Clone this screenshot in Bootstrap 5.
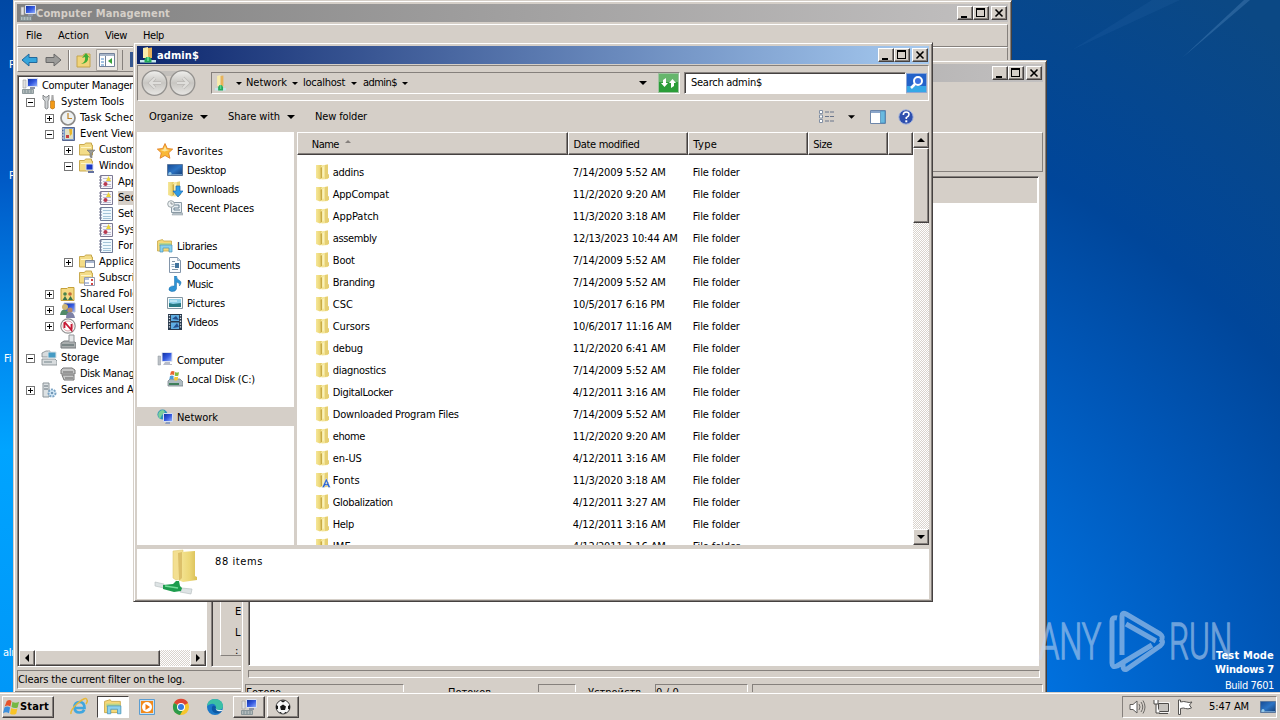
<!DOCTYPE html>
<html lang="en">
<head>
  <meta charset="UTF-8" />
  <meta name="viewport" content="width=device-width, initial-scale=1.0"/>
  <title>admin$</title>
  <link rel="stylesheet" href="https://cdn.jsdelivr.net/npm/bootstrap@5.3.0/dist/css/bootstrap.min.css" />
  <style>
    :root { --face: #d5cfc8; --shade: #85807c; --dark: #454140; }
    body {
      width: 1280px; height: 720px; overflow: hidden; position: relative; color: #000;
      font: 11px/14px "DejaVu Sans Condensed", "DejaVu Sans", sans-serif; letter-spacing: -.25px;
      background: radial-gradient(ellipse 950px 800px at 560px 800px, #0090ff 0, #0076e6 48%, #0057b8 76%, #00469a 93%, #0b4884 122%);
    }
    svg { display: block; flex: none; overflow: visible; }
    .ic { width: 16px; height: 16px; }
    .txt { white-space: nowrap; }
    .bar .txt, .side .txt, .files .txt, .head .txt, .build .txt { position: relative; top: 1px; }
    .face { background: var(--face); }
    .strip { left: 0; top: 0; width: 14px; height: 692px; background: linear-gradient(#0048a4, #0058c4 25%, #0086ee 48%, #00a4ff 65%, #0097f8); }
    .strip span { position: absolute; color: #fff; }
    .beam { left: 1012px; top: 0; }
    .win { position: absolute; background: var(--face); border: 1px solid; border-color: var(--face) #454140 #454140 var(--face); box-shadow: inset 1px 1px #fff, inset -1px -1px #85807c; padding: 3px; }
    .win-mmc { left: 13px; top: 0; width: 999px; height: 693px; }
    .win-events { left: 241px; top: 60px; width: 806px; height: 660px; }
    .win-files { left: 133px; top: 42px; width: 800px; height: 560px; }
    .bar { height: 18px; font-weight: bold; padding: 0 1px 0 3px; }
    .bar-off { background: linear-gradient(90deg, #808080, #c2c0c0); color: #d5cfc8; }
    .bar-on { background: linear-gradient(90deg, #0c266d, #a6caf0); color: #fff; }
    .cap { width: 16px; height: 14px; background: var(--face); border: 1px solid; border-color: #fff #454140 #454140 #fff; box-shadow: inset -1px -1px #85807c; }
    .raised { background: var(--face); border: 1px solid; border-color: #fff #454140 #454140 #fff; box-shadow: inset -1px -1px #85807c; }
    .sunk { border: 1px solid; border-color: #85807c #fff #fff #85807c; }
    .well { background: #fff; border: 1px solid; border-color: #85807c #fff #fff #85807c; box-shadow: inset 1px 1px #454140; }
    .well.face { background: var(--face); }
    .etch { border: 1px solid; border-color: #fff #85807c #85807c #fff; }
    .hatch { background: repeating-conic-gradient(#fff 0 25%, #d9d3cc 0 50%) 0 0 / 2px 2px; }
    .menu { height: 23px; padding-left: 8px; margin-top: 2px; }
    .tools { height: 25px; padding-left: 3px; }
    .tree { width: 190px; height: 592px; padding: 2px 0 0 1px; }
    .tree-line { height: 16px; }
    .tree-body { height: 572px; overflow: hidden; }
    .twig { width: 9px; height: 9px; border: 1px solid #777; background: #fff; flex: none; }
    .sel { background: var(--face); }
    .side { width: 157px; background: #fff; padding-top: 9px; }
    .side-line { height: 19px; }
    .head { height: 23px; }
    .head > div { border: 1px solid; border-color: #fff #454140 #454140 #fff; box-shadow: inset -1px -1px #85807c; padding: 0 0 0 4px; }
    .files { background: #fff; height: 390px; overflow: hidden; padding-top: 6px; }
    .file-line { height: 22px; padding-left: 18px; }
    .c-name { width: 272px; } .c-date { width: 120px; } .c-type { width: 120px; } .c-size { width: 80px; } .c-rest { width: 25px; }
    .task { left: 0; top: 692px; width: 1280px; height: 28px; background: var(--face); border-top: 1px solid var(--face); box-shadow: inset 0 1px #fff; padding: 3px 2px 2px; }
    .task-btn { width: 32px; height: 22px; }
    .pressed { background: #fff; border: 1px solid; border-color: #454140 #fff #fff #454140; }
    .brand { left: 1036px; top: 606px; }
    .build { right: 6px; top: 648px; color: #fff; line-height: 14px; }
  </style>
</head>
<body>
  <svg width="0" height="0" class="position-absolute">
    <defs>
      <linearGradient id="gFold" x2="1"><stop offset="0" stop-color="#f6e79a"/><stop offset=".6" stop-color="#ecd777"/><stop offset="1" stop-color="#d9bf55"/></linearGradient>
      <linearGradient id="gScr" x2="1" y2="1"><stop offset="0" stop-color="#0d2e9c"/><stop offset=".5" stop-color="#3358df"/><stop offset="1" stop-color="#9ab6ff"/></linearGradient>
      <linearGradient id="gSky" x2="1" y2="1"><stop offset="0" stop-color="#174b94"/><stop offset=".5" stop-color="#2c74c4"/><stop offset="1" stop-color="#123970"/></linearGradient>
      <linearGradient id="gBall" y2="1" x2="0"><stop offset="0" stop-color="#efefed"/><stop offset=".5" stop-color="#c8c6c2"/><stop offset="1" stop-color="#e8e7e4"/></linearGradient>
      <symbol id="min" viewBox="0 0 14 12"><path d="M3 9h6v2H3z"/></symbol>
      <symbol id="max" viewBox="0 0 14 12"><path d="M2 1h9v9H2zM3 3v6h7V3z" fill-rule="evenodd"/></symbol>
      <symbol id="close" viewBox="0 0 14 12"><path d="M3.500 2.500l7 7M10.500 2.500l-7 7" stroke="#000" stroke-width="1.600"/></symbol>
      <symbol id="down" viewBox="0 0 8 4"><path d="M0 0h8L4 4z"/></symbol>
      <symbol id="folder" viewBox="0 0 16 16"><path d="M1 1h6v13l-2 1.500-4-1.500z" fill="url(#gFold)"/><path d="M6 1.500l7-1V15l-6 .5-2-1z" fill="#f3e496"/><path d="M10 1l3-.5V10l1 .5V14l-4 1z" fill="#e6cf72"/><path d="M7 3v10.500L5.500 15V4z" fill="#c9ab45"/><path d="M7.500 3L9 2.500v10L7.500 13z" fill="#f9f1bd"/></symbol>
      <symbol id="fontfolder" viewBox="0 0 16 16"><use href="#folder"/><path d="M7 15.500L11.300 6l4.200 9.500h-2.200l-.7-2H10l-.7 2zM10.600 12h1.500l-.8-2.300z" fill="#245fd0" stroke="#fff" stroke-width=".4"/></symbol>
      <symbol id="netfolder" viewBox="0 0 16 16"><path d="M3 1l5-1v11H3z" fill="#f9ecab"/><path d="M8 1l4-.5V11H8z" fill="#e8b35a"/><path d="M0 13h16v2.500H0z" fill="#c4e6ec"/><path d="M4.500 12l2-2h3l2 2v3.500h-7z" fill="#25a95a"/><path d="M7 10h2v4H7z" fill="#57d88b"/></symbol>
      <symbol id="pc" viewBox="0 0 16 16"><path d="M5 .5h10v9H5z" fill="url(#gScr)" stroke="#dde2ee"/><path d="M8 10h5v2h2v1H6z" fill="#b7bcc9"/><path d="M1 4h2.500v9H1z" fill="#bcc1c6" stroke="#8d949c" stroke-width=".5"/></symbol>
      <symbol id="mmc" viewBox="0 0 16 16"><path d="M5.500.5h10v8h-10z" fill="url(#gScr)" stroke="#dde2ee"/><path d="M8 9h5v2H8z" fill="#8c93a5"/><path d="M1 2h3v8H1z" fill="#e1e1e1" stroke="#9a9a9a" stroke-width=".6"/><path d="M.5 11.500h11v4H.5z" fill="#b4bcbc" stroke="#7b8a8e" stroke-width=".8"/><path d="M3 12v3M6 12v3M9 12v3" stroke="#6d8288" stroke-width=".8"/></symbol>
      <symbol id="tools" viewBox="0 0 16 16"><path d="M2 1v4l2 2v7q1.500 2 3 0V7l1-2V1L6 3H4z" fill="#cfd2d4" stroke="#73777a" stroke-width=".8"/><path d="M10.500 1h2l.5 6h-3z" fill="#aaa"/><path d="M9.500 7h4v7q-2 2-4 0z" fill="#f29a16" stroke="#b96d08" stroke-width=".6"/></symbol>
      <symbol id="clock" viewBox="0 0 16 16"><circle cx="8" cy="8" r="7" fill="#edf1f2" stroke="#8d8b88" stroke-width="1.700"/><path d="M8 3v5.500h4" stroke="#c1852a" stroke-width="1.200" fill="none"/></symbol>
      <symbol id="book" viewBox="0 0 16 16"><path d="M2.500 1.500h12v13h-12z" fill="#7d9ccb" stroke="#56668f"/><path d="M5 3h8v10H5z" fill="#dfe0c4"/><path d="M9 3h3v5l-2 2z" fill="#e8b62a"/><path d="M6 9h3v3H6z" fill="#c54040"/><path d="M1 3h3M1 6h3M1 9h3M1 12h3" stroke="#ddd"/></symbol>
      <symbol id="log" viewBox="0 0 16 16"><path d="M2.500 1.500h12v13h-12z" fill="#f8f6fa" stroke="#7c7a94"/><path d="M5 4.500h8M5 7.500h8M5 10.500h8M5 12.500h8" stroke="#bcbcd0"/><path d="M10.500 2l2.500 5H8z" fill="#ecd53c"/><circle cx="7.500" cy="10" r="2" fill="#b8384e"/><path d="M1 3h3M1 6h3M1 9h3M1 12h3" stroke="#7a7a94"/></symbol>
      <symbol id="loglines" viewBox="0 0 16 16"><path d="M2.500 1.500h12v13h-12z" fill="#eff8fd" stroke="#6f7a96"/><path d="M5 4.500h8M5 7.500h8M5 10.500h8M5 12.500h8" stroke="#a4c4d8"/><path d="M1 3h3M1 6h3M1 9h3M1 12h3" stroke="#707692"/></symbol>
      <symbol id="flat" viewBox="0 0 16 16"><path d="M.5 2.500h5l1-1.500h6v2h1v10H.5z" fill="#f3dc88" stroke="#c9aa50"/><path d="M2 5.500h10" stroke="#fff6c8"/></symbol>
      <symbol id="filter" viewBox="0 0 16 16"><use href="#flat"/><path d="M8 8h8l-3 3v5l-2-1v-4z" fill="#9b9b95" stroke="#666" stroke-width=".5"/></symbol>
      <symbol id="winlog" viewBox="0 0 16 16"><use href="#flat"/><path d="M7 6h7v6H7z" fill="#1c38c6" stroke="#d4def4"/><path d="M9 13h6v2H9z" fill="#6472a0"/></symbol>
      <symbol id="applog" viewBox="0 0 16 16"><use href="#flat"/><path d="M6.500 6.500h9v7h-9z" fill="#fff" stroke="#798395"/><path d="M7 7h8v2H7z" fill="#a9b7d0"/></symbol>
      <symbol id="subs" viewBox="0 0 16 16"><use href="#flat"/><path d="M5.500 7.500h10v8h-10z" fill="#fff" stroke="#949cb2"/><path d="M6 9h4M6 13h4" stroke="#6884bd"/><path d="M12 9h2v2h-2zM12 13h2v2h-2z" fill="#cf4545"/></symbol>
      <symbol id="shared" viewBox="0 0 16 16"><path d="M1 2.500h6l1-1h6v13H1z" fill="#f4d982" stroke="#c5a13b"/><circle cx="5" cy="8" r="1.800" fill="#49834d"/><circle cx="10" cy="8" r="1.800" fill="#c46a3a"/><path d="M2.500 14l2.500-4 2.500 4M8 14l2.500-4 2.500 4" fill="#38734b"/></symbol>
      <symbol id="users" viewBox="0 0 16 16"><path d="M4 1h11v9H4z" fill="url(#gScr)" stroke="#b8bccc"/><circle cx="5" cy="5" r="3" fill="#d1b774"/><path d="M0 13q1-6 5-5t5 5z" fill="#528a67"/><circle cx="10" cy="8" r="2.600" fill="#b68765"/><path d="M6 16q0-6 4-6t5 6z" fill="#7d81a6"/></symbol>
      <symbol id="perf" viewBox="0 0 16 16"><circle cx="8" cy="8" r="7.200" fill="#fff" stroke="#919191" stroke-width="1.200"/><circle cx="8" cy="8" r="5" fill="none" stroke="#d9a0a5" stroke-width="1"/><path d="M4.500 4v6M4.500 4l7 8V6" fill="none" stroke="#c61a36" stroke-width="1.800"/></symbol>
      <symbol id="device" viewBox="0 0 16 16"><path d="M1 9l3-2h9l3 2v5H1z" fill="#a9adae" stroke="#75797c"/><path d="M9 1h5v7H9z" fill="#e5e7e8" stroke="#919598"/><path d="M2 11h12" stroke="#6c7a7a" stroke-width="1.500"/></symbol>
      <symbol id="storage" viewBox="0 0 16 16"><path d="M1 3l4-2h4v6H1zM1 9h13l2 2v4H1z" fill="#d8dcde" stroke="#7d878b" stroke-width=".8"/><path d="M7 2h8v6H7z" fill="#459bc4" stroke="#d9e1e4"/><path d="M3 12h8" stroke="#75858b"/></symbol>
      <symbol id="disk" viewBox="0 0 16 16"><path d="M3 2h9l3 2v4H1V4zM2 9h12v5H4z" fill="#c6c7c7" stroke="#777"/><path d="M3 6h10M5 12h8" stroke="#666" stroke-width="1.200"/></symbol>
      <symbol id="services" viewBox="0 0 16 16"><path d="M2 1h6v14H2z" fill="#dce1e3" stroke="#8b9499"/><path d="M3 4h4M3 7h4" stroke="#64717b"/><circle cx="11" cy="11" r="3.500" fill="#d9ecf9" stroke="#7aa3c4" stroke-width="2" stroke-dasharray="2 1"/><circle cx="11" cy="11" r="1.300" fill="#7398b7"/></symbol>
      <symbol id="star" viewBox="0 0 16 16"><path d="M8 .5l2.300 5 5.400.6-4 3.700 1.200 5.500L8 12.500l-4.900 2.800 1.200-5.500-4-3.700 5.400-.6z" fill="#f9b836" stroke="#e0791c" stroke-width=".8"/><path d="M8 3l1.500 3.500 3 .4-5 1.600-4-1.500 3-.5z" fill="#fee59a"/></symbol>
      <symbol id="desktop" viewBox="0 0 16 16"><path d="M.5 2.500h15v11H.5z" fill="url(#gSky)" stroke="#5c789d"/><path d="M1 12.500h14" stroke="#6e9cc9"/><circle cx="3" cy="11.500" r="1.500" fill="#99cbe8"/></symbol>
      <symbol id="downloads" viewBox="0 0 16 16"><use href="#folder" x="0"/><path d="M9 5h4v5h3l-5 6-5-6h3z" fill="#2f9be6" stroke="#1869b4" stroke-width=".7"/></symbol>
      <symbol id="recent" viewBox="0 0 16 16"><path d="M4.500 2.500h10v10h-10z" fill="#e8eef2" stroke="#8a9aa5"/><path d="M6 13h10v2H5z" fill="#bfc9cf" stroke="#8a969d" stroke-width=".5"/><path d="M7 5h5v3H7v2h6" stroke="#6f8594" fill="none"/><circle cx="4" cy="4" r="3.300" fill="#edf1f2" stroke="#9ca6aa"/><path d="M4 2v2h2" stroke="#7a8488" fill="none" stroke-width=".8"/></symbol>
      <symbol id="libs" viewBox="0 0 16 16"><path d="M.5 3l5-1.500 1 1.500h8v10H.5z" fill="#f5d878" stroke="#c8a849" stroke-width=".8"/><path d="M2 5h12v3H2z" fill="#b9d68a"/><path d="M3 7h12v7h-3v-4H6v4H3z" fill="#8bd0ed" stroke="#4897bd" stroke-width=".7"/></symbol>
      <symbol id="docs" viewBox="0 0 16 16"><path d="M2.500.5h8l3 3v12h-11z" fill="#fcfdff" stroke="#8295aa"/><path d="M10.500.5v3h3" fill="#cad6e2" stroke="#8295aa" stroke-width=".6"/><path d="M5 4.500h3M5 12.500h6" stroke="#8296a8"/><path d="M8 6h4v5H8z" fill="#41739d"/><path d="M4.500 7.500h3M4.500 9.500h3" stroke="#8fa9bf"/></symbol>
      <symbol id="music" viewBox="0 0 16 16"><path d="M7.500 0h2q0 3 3 4.500t0 5.500q1-3-3-4v7q-1 3-5 2.500-4-1-2-4 2-2 5-1.500z" fill="#2d93d5" stroke="#176dab" stroke-width=".5"/></symbol>
      <symbol id="pics" viewBox="0 0 16 16"><path d="M.5 2.500h15v11H.5z" fill="#f7fafb" stroke="#8496a2"/><path d="M2 4h12v8H2z" fill="#8fd0e8"/><path d="M2 8l4 1 8-1v4H2z" fill="#297b85"/><path d="M3 6h7" stroke="#eafaff"/></symbol>
      <symbol id="video" viewBox="0 0 16 16"><path d="M1 0h14v16H1z" fill="#28394c"/><path d="M4 1h8v6H4zM4 8.500h8V15H4z" fill="#5faee2"/><path d="M5 5l4-3 3 4zM6 14l4-5 2 4z" fill="#244f8b"/><path d="M2.500 1v14M13.500 1v14" stroke="#dbe2e8" stroke-width="1.300" stroke-dasharray="1.300 1.500"/></symbol>
      <symbol id="cdrive" viewBox="0 0 16 16"><path d="M1 10l2-2h10l3 3v4H1z" fill="#aebbc1" stroke="#78868c" stroke-width=".8"/><path d="M2 12h10v2H2z" fill="#3f7f5a"/><path d="M4 .5q2-1 3.500 0L7 4q-2-1-4 0z" fill="#e8642f"/><path d="M8 1q2 1 4 0l-.6 3.500q-2 1-3.700 0z" fill="#84bb3e"/><path d="M3 5q2-1 3.700 0L6.300 8.500q-2-1-4 0z" fill="#4a9cdb"/><path d="M7.500 5.500q2 1 3.700 0l-.6 3.500q-2 1-3.500 0z" fill="#f6c934"/></symbol>
      <symbol id="network" viewBox="0 0 16 16"><circle cx="5.500" cy="5.500" r="5" fill="#2b94b8"/><path d="M2 3q4-4 6 0L5 6 3 10Q0 7 2 3z" fill="#7cd09a"/><path d="M6.500 4.500h9v8h-9z" fill="url(#gScr)" stroke="#d5e0f3"/><path d="M9 13h4v2H8z" fill="#8d9ec1"/></symbol>
      <symbol id="flagwin" viewBox="0 0 18 18"><path d="M4 2q3-2 5 0L7.800 8q-3-2-6 0z" fill="#e6532a"/><path d="M10 3q3 2 7 0l-1.500 6q-3 1.500-6.500-.5z" fill="#75b843"/><path d="M1.500 9q3-2 6 0l-1.200 6q-3-2-6.300 0z" fill="#3c8fdc"/><path d="M8.700 9.500q3 2 6.500.5L14 15.500q-3 2-6.500 0z" fill="#f8c425"/></symbol>
    </defs>
  </svg>

  <div class="strip position-absolute">
    <span style="left:9px;top:58px">P</span><span style="left:9px;top:169px">P</span><span style="left:4px;top:352px">Fi</span><span style="left:3px;top:646px">alı</span>
  </div>
  <svg class="beam position-absolute" width="268" height="690">
    <path d="M170 58L232 0h6z" fill="#5a8ec4" opacity=".35"/><path d="M60 50L140 0h28z" fill="#3f7cbb" opacity=".12"/>
  </svg>

  <!-- Computer Management -->
  <div class="win win-mmc">
    <div class="bar bar-off d-flex align-items-center" data-caps>
      <svg class="ic"><use href="#mmc"/></svg><span class="txt" data-w="134">Computer Management</span>
    </div>
    <div class="menu etch d-flex align-items-center">
      <span class="txt" data-w="16">File</span><span class="txt ms-3" data-w="31">Action</span><span class="txt ms-3" data-w="22">View</span><span class="txt ms-3" data-w="21">Help</span>
    </div>
    <div class="tools etch d-flex align-items-center">
      <svg width="100" height="24" viewBox="0 0 100 24">
        <path d="M1 12l7-6v3.500h8v5H8V18z" fill="#35a5dc" stroke="#23689b"/><path d="M40 12l-7-6v3.500h-8v5h8V18z" fill="#9b9b99" stroke="#686868"/>
        <path d="M47.500 2v20" stroke="#85807c"/><path d="M48.500 2v20" stroke="#fff"/>
        <path d="M56 8h6l1-2h6v13H56z" fill="#f1d479" stroke="#c4a34d"/><path d="M60 16q5-2 4-7l-3 1 4-5 4 5-2-1q1 6-7 7z" fill="#3ead35"/>
        <path d="M75.500 1.500h21v21h-21z" fill="#ece8e3" stroke="#a5a09b"/><path d="M78.500 5.500h15v13h-15z" fill="#fff" stroke="#738199"/><path d="M79 6h14v2H79z" fill="#a8b6c9"/><path d="M80 11h3M80 14h3M80 17h3" stroke="#4a89c7"/><path d="M84.500 8v10" stroke="#738199"/><path d="M91 10v6l-4-3z" fill="#38a03b"/>
      </svg>
      <svg class="ms-1" width="16" height="24"><path d="M-2.500 2v20" stroke="#85807c"/><path d="M5 4h9v15H5z" fill="#35568f"/></svg>
    </div>
    <div class="d-flex" style="margin-top:3px">
      <div class="tree well">
        <div class="tree-body" id="tree"></div>
        <div class="d-flex hatch">
          <div class="raised" style="width:16px;height:16px"><svg width="14" height="14"><path d="M9 3v8L5 7z"/></svg></div>
          <div class="raised" style="width:125px"></div>
          <div class="raised ms-auto me-0" style="width:16px;height:16px"><svg width="14" height="14"><path d="M5 3v8l4-4z"/></svg></div>
        </div>
      </div>
      <div class="well face flex-fill ms-1 d-flex" style="height:592px">
        <div class="etch ms-2 d-flex flex-column justify-content-end" style="width:500px;height:580px;padding:0 0 0 14px">
          <span style="margin-bottom:7px">E</span><span class="mb-1">L</span><span style="height:11px">:</span>
        </div>
      </div>
    </div>
    <div class="sunk d-flex align-items-center" style="height:19px;margin-top:3px"><span class="txt" data-w="167">Clears the current filter on the log.</span></div>
  </div>

  <!-- window behind the folder view -->
  <div class="win win-events">
    <div class="bar bar-off d-flex align-items-center" data-caps></div>
    <div class="etch" style="height:40px;margin-top:50px"></div>
    <div class="well" style="height:490px;margin:4px 4px 0 3px"><div class="face" style="height:25px;margin:1px"></div></div>
    <div class="sunk" style="height:8px;margin:4px 3px 0"></div>
    <div class="d-flex" style="margin-top:6px;height:20px">
      <div class="sunk" style="width:159px;padding-top:1px"><span class="txt" data-w="35">Готово</span></div>
      <div style="width:134px;padding:2px 0 0 44px"><span class="txt" data-w="43">Потоков</span></div>
      <div class="sunk" style="width:38px"></div>
      <div style="width:79px;padding:2px 0 0 12px"><span class="txt" data-w="53">Устройств</span></div>
      <div class="sunk" style="width:93px;padding-top:1px"><span class="txt" data-w="23">0 / 0</span></div>
      <div class="sunk flex-fill ms-1"></div>
    </div>
  </div>

  <!-- admin$ folder view -->
  <div class="win win-files">
    <div class="bar bar-on d-flex align-items-center" data-caps>
      <svg class="ic" style="margin-right:1px"><use href="#netfolder"/></svg><span class="txt" data-w="42">admin$</span>
    </div>
    <div class="sunk d-flex align-items-center" style="height:36px;margin-top:1px">
      <svg width="62" height="28" viewBox="0 0 62 28" style="margin-left:3px">
        <path d="M10 2h38v5H10z" fill="#c2bfbb"/>
        <g fill="url(#gBall)" stroke="#93918e" stroke-width="1.300"><circle cx="13.500" cy="14" r="12.300"/><circle cx="41.500" cy="14" r="12.300"/></g>
        <path d="M20 14H9M14 9l-5 5 5 5M36 14h11M42 9l5 5-5 5" fill="none" stroke="#bab8b5" stroke-width="3.500"/>
        <path d="M20 14H9M14 9l-5 5 5 5M36 14h11M42 9l5 5-5 5" fill="none" stroke="#dfdedb" stroke-width="2.200"/>
      </svg>
      <div class="sunk d-flex align-items-center" style="width:469px;height:22px;margin-left:8px">
        <svg class="ic"><use href="#netfolder" transform="translate(3 0) scale(.7 1)"/></svg>
        <svg width="6" height="3" style="margin:0 4px 0 8px"><use href="#down"/></svg><span class="txt" data-w="41">Network</span>
        <svg width="6" height="3" style="margin:0 5px"><use href="#down"/></svg><span class="txt" data-w="42">localhost</span>
        <svg width="6" height="3" style="margin:0 6px"><use href="#down"/></svg><span class="txt" data-w="34">admin$</span>
        <svg width="6" height="3" style="margin-left:5px"><use href="#down"/></svg>
        <svg width="8" height="4" style="margin-left:auto;margin-right:11px"><use href="#down"/></svg>
        <svg width="21" height="20" viewBox="0 0 21 20"><path d="M.5.500h20v19H.5z" fill="#2b9d38" stroke="#9fc4a1"/><path d="M1 1h19v8H1z" fill="#66b66c"/><path d="M8 5v5h2l-3.500 4L3 10h2V7zM13 15v-5h-2l3.500-4L18 10h-2v3z" fill="#fff"/></svg>
      </div>
      <div class="well d-flex align-items-center" style="width:222px;height:22px;margin-left:4px;padding-left:6px"><span class="txt" data-w="71">Search admin$</span></div>
      <svg width="21" height="20" viewBox="0 0 21 20"><path d="M.5.500h20v19H.5z" fill="#2362c9" stroke="#8ca6d4"/><path d="M1 13h19v6H1z" fill="#35a7e6"/><circle cx="12" cy="8" r="4" fill="#3d72df" stroke="#fff" stroke-width="2"/><path d="M9 11l-4 4" stroke="#fff" stroke-width="2.500"/></svg>
    </div>
    <div class="d-flex align-items-center" style="height:31px;padding-left:12px">
      <span class="txt" data-w="44">Organize</span><svg width="8" height="4" style="margin:0 19px 0 7px"><use href="#down"/></svg>
      <span class="txt ms-0" style="padding-left:1px" data-w="53">Share with</span><svg width="8" height="4" style="margin:0 20px 0 7px"><use href="#down"/></svg>
      <span class="txt" data-w="52">New folder</span>
      <div class="d-flex align-items-center ms-auto" style="margin-right:15px">
        <svg width="16" height="14"><path d="M.5.500h3v3h-3zM.5 5h3v3h-3zM.5 9.500h3v3h-3z" fill="#fff" stroke="#8290a4"/><path d="M6 2h9M6 6.500h9M6 11h9" stroke="#68748b" stroke-dasharray="4 1"/></svg>
        <svg width="7" height="4" style="margin:0 15px 0 13px"><use href="#down"/></svg>
        <svg width="16" height="14"><path d="M.5.500h15v13H.5z" fill="#fff" stroke="#6d86aa"/><path d="M1 1h9v2H1z" fill="#8ba6ca"/><path d="M10.500 1h4.500v12h-4.500z" fill="#69b9df" stroke="#4586b5" stroke-width=".7"/></svg>
        <svg class="ic" viewBox="0 0 16 16" style="margin-left:12px"><circle cx="8" cy="8" r="7.200" fill="#2e4fae" stroke="#a4b4dc"/><path d="M5.300 6q0-3 2.900-3t2.800 2.600q0 1.600-2.700 3V10" fill="none" stroke="#fff" stroke-width="1.600"/><path d="M7.300 11.300h2v2h-2z" fill="#fff"/></svg>
      </div>
    </div>
    <div class="d-flex" style="height:413px">
      <div class="side" id="places"></div>
      <div style="width:3px"></div>
      <div class="flex-fill" style="min-width:0">
        <div class="head face d-flex">
          <div class="c-name d-flex align-items-center" style="padding-left:14px"><span class="txt" data-w="27">Name</span><svg width="6" height="3" class="mb-1" style="margin-left:6px"><path d="M0 3h6L3 0z" fill="#85807c"/></svg></div>
          <div class="c-date d-flex align-items-center"><span class="txt" data-w="66">Date modified</span></div>
          <div class="c-type d-flex align-items-center"><span class="txt" data-w="24">Type</span></div>
          <div class="c-size d-flex align-items-center"><span class="txt" data-w="19">Size</span></div>
          <div class="c-rest"></div>
        </div>
        <div class="files" id="files"></div>
      </div>
      <div class="hatch d-flex flex-column" style="width:16px">
        <div class="raised" style="height:16px"><svg width="14" height="14"><path d="M3 9h8L7 5z"/></svg></div>
        <div class="raised" style="height:75px"></div>
        <div class="raised mt-auto" style="height:16px"><svg width="14" height="14"><path d="M3 5h8L7 9z"/></svg></div>
      </div>
    </div>
    <div class="bg-white d-flex" style="height:50px;margin-top:4px">
      <svg width="42" height="46" viewBox="0 0 42 46" style="margin-left:18px">
        <path d="M18 2l10-1v28l-7 2-3-2z" fill="#f3df91" stroke="#dfc974" stroke-width=".6"/><path d="M26 3l14-1v25l2 1v3l-14 2-5-2z" fill="url(#gFold)"/><path d="M27 3v26l-3 3-1-28z" fill="#dcc06a"/>
        <path d="M0 33l9 2v4l-9-2zM26 39l11 1-1 5-11-2z" fill="#dde3e4" stroke="#b1babc" stroke-width=".6"/><path d="M8 36l10-1 3-3h3l1 5 2 2-1 3-7 1-11-3z" fill="#1d9c4d"/><path d="M10 37l13 2" stroke="#74dc99" stroke-width="1.500"/>
      </svg>
      <span class="txt" style="margin:6px 0 0 18px" data-w="48">88 items</span>
    </div>
  </div>

  <!-- watermark and build label -->
  <svg class="brand position-absolute" width="200" height="70" fill="#c6d9f0" opacity=".55">
    <g font-family="Roboto, sans-serif" font-weight="300" font-size="50" stroke="#c6d9f0" stroke-width="1.300">
      <text x="3" y="53" textLength="62" lengthAdjust="spacingAndGlyphs">ANY</text>
      <text x="133" y="53" textLength="63" lengthAdjust="spacingAndGlyphs">RUN</text>
    </g>
    <path d="M81 12q-5-1-5 3v42q0 5 5 3l35-21M86 49V10q0-4 4-2l34 20q4 3 1 6M90 18l30 17M87 56v4q0 5 4 3l33-23q5-4 0-7M88 48" fill="none" stroke="#c6d9f0" stroke-width="5" stroke-linejoin="round"/>
  </svg>
  <div class="build position-absolute text-end">
    <div class="fw-bold"><span class="txt" data-w="58">Test Mode</span></div>
    <div class="fw-bold"><span class="txt" data-w="59">Windows 7</span></div>
    <div style="padding-top:2px"><span class="txt" data-w="49">Build 7601</span></div>
  </div>

  <div class="task position-absolute d-flex">
    <div class="raised d-flex align-items-center fw-bold" style="width:52px;height:22px"><svg width="17" height="17"><use href="#flagwin"/></svg><span class="txt" data-w="29">Start</span></div>
    <svg width="18" height="18" viewBox="0 0 18 18" style="margin:2px 9px 0 16px"><path d="M4.500 10h10q0-6-5-6t-5 5.500q0 5 5 5 3.500 0 4.700-2.700" fill="none" stroke="#3fa6df" stroke-width="2.700"/><path d="M1 16Q0 12 8 5t9-3q1 1-1 4" fill="none" stroke="#e7b839" stroke-width="1.500"/></svg>
    <div class="task-btn pressed d-flex align-items-center justify-content-center"><svg width="18" height="18" viewBox="0 0 16 16"><use href="#libs"/></svg></div>
    <svg width="16" height="16" viewBox="0 0 16 16" style="margin:3px 18px 0 10px"><path d="M.5.500h15v15H.5z" fill="#c9e0f2" stroke="#5b9dd1"/><path d="M2 2h12v12H2z" fill="#f28a1c"/><circle cx="8" cy="8" r="5" fill="#fff"/><path d="M6.500 5v6L11 8z" fill="#f07a10"/></svg>
    <svg width="16" height="16" viewBox="0 0 16 16" style="margin:3px 18px 0 0"><circle cx="8" cy="8" r="8" fill="#f6c62d"/><path d="M8 8L1 4a8 8 0 0 1 14 0z" fill="#dd4535"/><path d="M8 8L1 4a8 8 0 0 0 6 12l4-7z" fill="#2b9b4a"/><circle cx="8" cy="8" r="4" fill="#fff"/><circle cx="8" cy="8" r="3" fill="#347be1"/></svg>
    <svg width="16" height="16" viewBox="0 0 16 16" style="margin:3px 10px 0 0"><circle cx="8" cy="8" r="8" fill="#1b78c8"/><path d="M0 7q1-7 8-7 8 1 8 7 0 4-5 4-3 0-2-3-1-4-5-3-3 1-4 2z" fill="#3bc0a5"/><path d="M9 8q-1 4 6 4-3 3-7 2-4-2-3-6 1-3 4 0z" fill="#0c59a4"/><path d="M9 8q-1 3 3 3h4q-2 2-5 1-3-1-2-4z" fill="#e9f4f8"/></svg>
    <div class="task-btn raised d-flex align-items-center justify-content-center"><svg class="ic"><use href="#mmc"/></svg></div>
    <div class="task-btn raised d-flex align-items-center justify-content-center" style="margin-left:2px"><svg width="16" height="16" viewBox="0 0 16 16"><circle cx="8" cy="8" r="7" fill="#f5f5f5" stroke="#444"/><path d="M8 5.500l3 2-1 3.500H6L5 7.500zM5 1.500h6L8 3.500zM1 6l2 1v3l-2 .5zM15 6l-2 1v3l2 .5zM4 13l2 0 1 2zM12 13l-2 0-1 2z" fill="#171717"/></svg></div>
    <div class="sunk d-flex align-items-center ms-auto" style="width:155px;height:22px;padding-left:6px;margin-right:1px">
      <svg width="16" height="16" viewBox="0 0 16 16"><path d="M1 5.500h3L8 2v12l-4-3.500H1z" fill="#fff" stroke="#5f5d5a"/><path d="M10 5q2 3 0 6M12 3q3.500 5 0 10M14 1.500q4 6.500 0 13" fill="none" stroke="#6b6966"/></svg>
      <svg width="16" height="16" viewBox="0 0 16 16" style="margin-left:8px"><path d="M5.500 4.500h10v8h-10z" fill="#b9b7b4" stroke="#fff" stroke-width="2.500"/><path d="M5.500 4.500h10v8h-10zM6 14.500h9" fill="#c5c2be" stroke="#4e4c4a"/><path d="M1 1v4h4V1M3 5v9h4" fill="#fff" stroke="#4e4c4a"/></svg>
      <svg width="16" height="16" viewBox="0 0 16 16" style="margin-left:8px"><path d="M1.500 1v14.500h2V9.500q3-1 5 0t6-.5l-2-3 2.500-3q-3 1-5.500 0t-6 0V1z" fill="#fff" stroke="#565452"/></svg>
      <span class="txt" style="margin-left:16px" data-w="40">5:47 AM</span>
      <svg class="ic" style="margin-left:11px"><use href="#desktop"/></svg>
    </div>
  </div>

  <script src="https://cdn.jsdelivr.net/npm/bootstrap@5.3.0/dist/js/bootstrap.bundle.min.js"></script>
  <script>
    // caption buttons
    document.querySelectorAll("[data-caps]").forEach(bar => {
      bar.insertAdjacentHTML("beforeend", `
        <div class="d-flex ms-auto">
          <div class="cap"><svg width="14" height="12"><use href="#min"/></svg></div>
          <div class="cap"><svg width="14" height="12"><use href="#max"/></svg></div>
          <div class="cap" style="margin-left:2px"><svg width="14" height="12"><use href="#close"/></svg></div>
        </div>`);
    });

    // [level, twig, icon, label, width]
    const tree = [
      [0, "", "mmc", "Computer Management (Local)", 146],
      [1, "-", "tools", "System Tools", 63],
      [2, "+", "clock", "Task Scheduler", 75],
      [2, "-", "book", "Event Viewer", 64],
      [3, "+", "filter", "Custom Views", 66],
      [3, "-", "winlog", "Windows Logs", 69],
      [4, "", "log", "Application", 54],
      [4, "", "log", "Security", 41],
      [4, "", "loglines", "Setup", 28],
      [4, "", "log", "System", 36],
      [4, "", "loglines", "Forwarded Events", 87],
      [3, "+", "applog", "Applications and Services Logs", 154],
      [3, "", "subs", "Subscriptions", 65],
      [2, "+", "shared", "Shared Folders", 74],
      [2, "+", "users", "Local Users and Groups", 115],
      [2, "+", "perf", "Performance", 61],
      [2, "", "device", "Device Manager", 78],
      [1, "-", "storage", "Storage", 38],
      [2, "", "disk", "Disk Management", 85],
      [1, "+", "services", "Services and Applications", 126]
    ];
    document.getElementById("tree").innerHTML = tree.map(([level, twig, icon, label, w]) => {
      const pad = level === 0 ? 3 : 7 + (level - 1) * 19;
      const box = level === 0 ? "" : twig
        ? `<div class="twig"><svg width="7" height="7"><path d="M1 3.500h5${twig === "+" ? "M3.500 1v5" : ""}" stroke="#000"/></svg></div>`
        : `<div style="width:9px"></div>`;
      return `<div class="tree-line d-flex align-items-center" style="padding-left:${pad}px">${box}
        <svg class="ic" style="margin:0 4px 0 ${level ? 6 : 0}px"><use href="#${icon}"/></svg>
        <span class="txt ${label === "Security" ? "sel" : ""}" data-w="${w}">${label}</span></div>`;
    }).join("");

    const places = [
      [0, "star", "Favorites", 46], [1, "desktop", "Desktop", 39], [1, "downloads", "Downloads", 52], [1, "recent", "Recent Places", 67], null,
      [0, "libs", "Libraries", 40], [1, "docs", "Documents", 53], [1, "music", "Music", 26], [1, "pics", "Pictures", 38], [1, "video", "Videos", 31], null,
      [0, "pc", "Computer", 47], [1, "cdrive", "Local Disk (C:)", 68], null,
      [0, "network", "Network", 41]
    ];
    document.getElementById("places").innerHTML = places.map(p => p
      ? `<div class="side-line d-flex align-items-center ${p[2] === "Network" ? "sel" : ""}" style="padding-left:${20 + p[0] * 10}px">
          <svg class="ic"><use href="#${p[1]}"/></svg><span class="txt ms-1" data-w="${p[3]}">${p[2]}</span></div>`
      : `<div class="side-line"></div>`).join("");

    const files = [
      ["addins", 31, "7/14/2009 5:52 AM", 93], ["AppCompat", 56, "11/2/2020 9:20 AM", 93],
      ["AppPatch", 46, "11/3/2020 3:18 AM", 93], ["assembly", 44, "12/13/2023 10:44 AM", 105],
      ["Boot", 22, "7/14/2009 5:52 AM", 93], ["Branding", 42, "7/14/2009 5:52 AM", 93],
      ["CSC", 20, "10/5/2017 6:16 PM", 92], ["Cursors", 37, "10/6/2017 11:16 AM", 99],
      ["debug", 30, "11/2/2020 6:41 AM", 93], ["diagnostics", 53, "7/14/2009 5:52 AM", 93],
      ["DigitalLocker", 60, "4/12/2011 3:16 AM", 93], ["Downloaded Program Files", 126, "7/14/2009 5:52 AM", 93],
      ["ehome", 32, "11/2/2020 9:20 AM", 93], ["en-US", 29, "4/12/2011 3:16 AM", 93],
      ["Fonts", 27, "11/3/2020 3:18 AM", 93], ["Globalization", 60, "4/12/2011 3:27 AM", 93],
      ["Help", 21, "4/12/2011 3:16 AM", 93], ["IME", 18, "4/12/2011 3:16 AM", 93]
    ];
    document.getElementById("files").innerHTML = files.map(([name, w, date, dw]) => `
      <div class="file-line d-flex align-items-center">
        <div class="d-flex align-items-center" style="width:258px">
          <svg class="ic"><use href="#${name === "Fonts" ? "fontfolder" : "folder"}"/></svg>
          <span class="txt" style="margin-left:2px" data-w="${w}">${name}</span>
        </div>
        <div class="c-date"><span class="txt" data-w="${dw}">${date}</span></div>
        <div class="c-type"><span class="txt" data-w="47">File folder</span></div>
      </div>`).join("");

    // tighten each label to its own width
    document.querySelectorAll("[data-w]").forEach(el => {
      el.style.letterSpacing = "0";
      const natural = el.getBoundingClientRect().width;
      el.style.letterSpacing = (el.dataset.w - natural) / el.textContent.length + "px";
    });
  </script>
</body>
</html>
